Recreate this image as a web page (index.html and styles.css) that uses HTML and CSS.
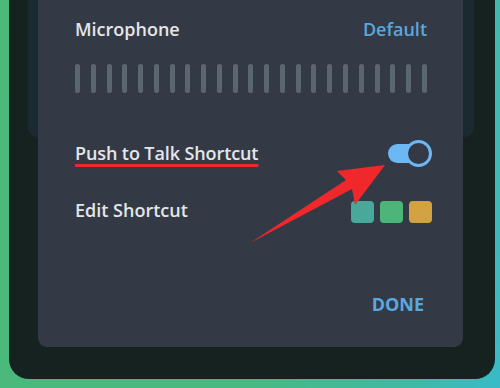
FILE: index.html
```html
<!DOCTYPE html>
<html lang="en">
<head>
<meta charset="utf-8">
<title>Voice Settings</title>
<link rel="stylesheet" href="styles.css">
</head>
<body>
<div class="frame">
  <div class="panel">
    <div class="row row-mic">
      <span class="label">Microphone</span>
      <span class="link">Default</span>
    </div>
    <div class="bars">
      <i></i><i></i><i></i><i></i><i></i><i></i><i></i><i></i><i></i><i></i><i></i><i></i>
      <i></i><i></i><i></i><i></i><i></i><i></i><i></i><i></i><i></i><i></i><i></i>
    </div>
    <div class="row row-ptt">
      <span class="label marked">Push to Talk Shortcut</span>
      <span class="toggle"><span class="knob"></span></span>
    </div>
    <div class="row row-edit">
      <span class="label">Edit Shortcut</span>
      <span class="keys"><i class="k1"></i><i class="k2"></i><i class="k3"></i></span>
    </div>
    <div class="actions">
      <span class="done">DONE</span>
    </div>
  </div>
</div>
<svg class="arrow" width="500" height="388" viewBox="0 0 500 388">
  <polygon points="385,165 337,171 346,180 250,243 352,189 355,205" fill="#f0282c"/>
</svg>
</body>
</html>
```
FILE: styles.css
```css
html, body {
  margin: 0;
  padding: 0;
}
body {
  width: 500px;
  height: 388px;
  overflow: hidden;
  position: relative;
  background: linear-gradient(100deg, #4bb97a 0%, #48b981 55%, #40b9a6 85%, #39bbc8 100%);
  font-family: "Open Sans", "Noto Sans", sans-serif;
}
.frame {
  position: relative;
  margin-left: 9px;
  width: 486px;
  height: 379px;
  box-sizing: border-box;
  padding: 0 32px 32px 29px;
  background: #16221f;
  border-radius: 0 0 20px 20px;
}
.frame::before {
  content: "";
  position: absolute;
  left: 19px;
  top: 0;
  width: 446px;
  height: 137px;
  background: #1b2931;
  border-radius: 0 0 9px 9px;
}
.panel {
  position: relative;
  height: 347px;
  box-sizing: border-box;
  background: #343a45;
  border-radius: 0 0 9px 9px;
  padding: 17px 36px 0 37px;
  display: flex;
  flex-direction: column;
}
.row {
  display: flex;
  align-items: center;
  justify-content: space-between;
  height: 24px;
}
.label {
  font-size: 18px;
  line-height: 24px;
  font-weight: 600;
  color: #e4e6e9;
}
.link {
  font-size: 18px;
  line-height: 24px;
  font-weight: 600;
  color: #5ba7dd;
}
.bars {
  margin-top: 23px;
  height: 29px;
  display: flex;
  justify-content: space-between;
}
.bars i {
  display: block;
  width: 5px;
  height: 29px;
  border-radius: 3px;
  background: #5c6672;
}
.row-ptt {
  margin-top: 48px;
}
.marked {
  letter-spacing: -0.1px;
  text-decoration: underline;
  text-decoration-color: #f0282c;
  text-decoration-thickness: 2.5px;
  text-underline-offset: 4px;
}
.toggle {
  position: relative;
  width: 44px;
  height: 27px;
  margin-right: -5px;
}
.toggle::before {
  content: "";
  position: absolute;
  left: 0;
  top: 4px;
  width: 36px;
  height: 19px;
  border-radius: 10px;
  background: #6bb8f3;
}
.knob {
  position: absolute;
  right: 0;
  top: 0;
  width: 27px;
  height: 27px;
  box-sizing: border-box;
  border-radius: 50%;
  border: 3px solid #6bb8f3;
  background: #343a45;
}
.row-edit {
  margin-top: 33px;
}
.keys {
  display: flex;
  gap: 6px;
  margin-right: -5px;
  margin-top: 4px;
}
.keys i {
  display: block;
  width: 23px;
  height: 22px;
  border-radius: 4px;
}
.keys .k1 { background: #48a99b; }
.keys .k2 { background: #4db57a; }
.keys .k3 { background: #d3a341; }
.actions {
  margin-top: 70px;
  display: flex;
  justify-content: flex-end;
  padding-right: 3px;
}
.done {
  font-size: 18px;
  line-height: 24px;
  font-weight: 700;
  color: #5aa8e2;
}
.arrow {
  position: absolute;
  left: 0;
  top: 0;
  pointer-events: none;
}
```
